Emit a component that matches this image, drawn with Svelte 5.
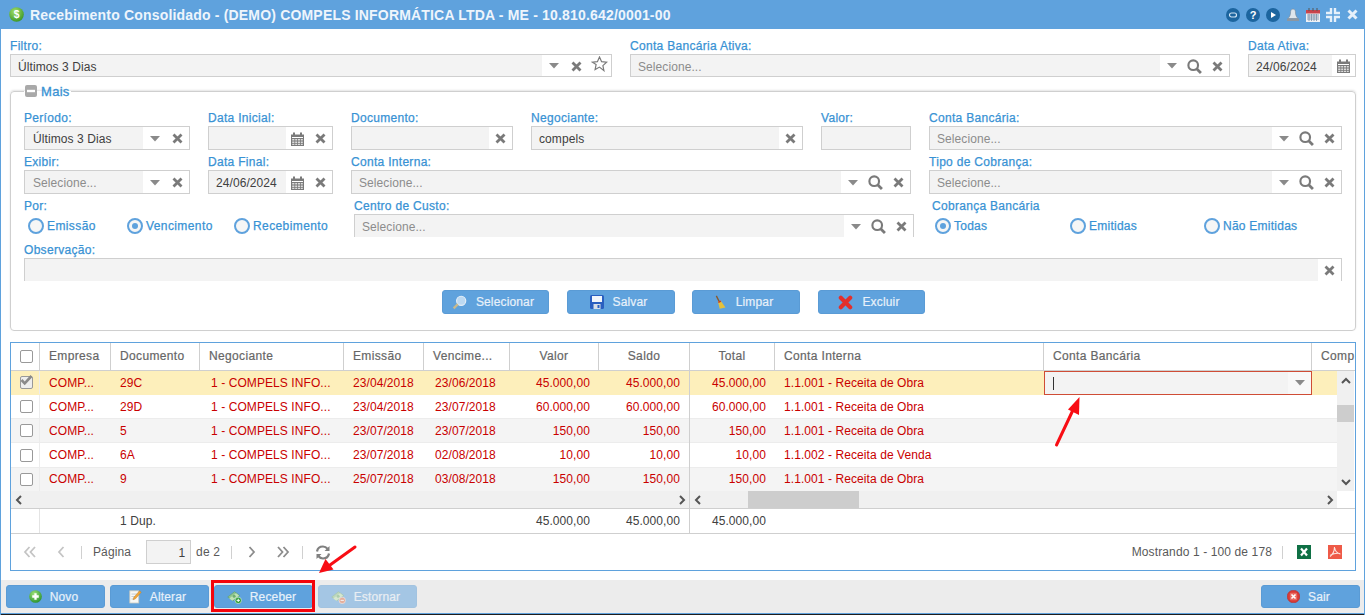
<script>
  const rows = [
    { doc: '29C', em: '23/04/2018', ve: '23/06/2018', val: '45.000,00', ci: '1.1.001 - Receita de Obra', sel: true },
    { doc: '29D', em: '23/04/2018', ve: '23/07/2018', val: '60.000,00', ci: '1.1.001 - Receita de Obra' },
    { doc: '5', em: '23/07/2018', ve: '23/07/2018', val: '150,00', ci: '1.1.001 - Receita de Obra', alt: true },
    { doc: '6A', em: '23/07/2018', ve: '02/08/2018', val: '10,00', ci: '1.1.002 - Receita de Venda' },
    { doc: '9', em: '25/07/2018', ve: '03/08/2018', val: '150,00', ci: '1.1.001 - Receita de Obra', alt: true }
  ];
</script>

{#snippet caret()}<span class="trig"><svg width="12" height="6" viewBox="0 0 12 6"><path d="M1 0h10L6 5.500z" fill="#8a8a8a"/></svg></span>{/snippet}
{#snippet times()}<span class="trig"><svg width="11" height="11" viewBox="0 0 11 11"><path d="M1.500 1.500l8 8M9.500 1.500l-8 8" stroke="#7a7a7a" stroke-width="2.800"/></svg></span>{/snippet}
{#snippet search()}<span class="trig"><svg width="15" height="15" viewBox="0 0 14 14"><circle cx="5.800" cy="5.800" r="4.500" fill="none" stroke="#7a7a7a" stroke-width="2"/><path d="M9 9l4 4" stroke="#7a7a7a" stroke-width="2.600"/></svg></span>{/snippet}
{#snippet star()}<span class="trig st"><svg width="17" height="16" viewBox="0 0 16 16"><path d="M8 1l2.100 4.700 5 .5-3.700 3.400 1 5L8 11.100 3.600 13.600l1-5L.9 6.200l5-.5z" fill="none" stroke="#7a7a7a" stroke-width="1.200"/></svg></span>{/snippet}
{#snippet cal()}<span class="trig"><svg width="13" height="14" viewBox="0 0 13 14"><path d="M0 2.500h13V14H0z" fill="#7a7a7a"/><path d="M3 0.500v3M10 0.500v3" stroke="#7a7a7a" stroke-width="2"/><path d="M1 5.500h11" stroke="#fff"/><path d="M1.200 7h2.200v1.600H1.200zM4.200 7h2v1.600h-2zM7 7h2v1.600H7zM9.800 7h2v1.600h-2zM1.200 9.400h2.200V11H1.200zM4.200 9.400h2V11h-2zM7 9.400h2V11H7zM9.800 9.400h2V11h-2zM1.200 11.700h2.200v1.300H1.200zM4.200 11.700h2v1.300h-2zM7 11.700h2v1.300H7zM9.800 11.700h2v1.300h-2z" fill="#ddd"/></svg></span>{/snippet}

{#snippet field(label, w, value, ph, trigs, cls = '')}
  <div class="fld {cls}" style="width:{w}px">
    <div class="lbl">{label}</div>
    <div class="box">
      <div class="inp" class:ph={ph}>{value || ph}</div>
      {#each trigs as t}
        {#if t === 'c'}{@render caret()}{:else if t === 'x'}{@render times()}{:else if t === 's'}{@render search()}{:else if t === 't'}{@render star()}{:else}{@render cal()}{/if}
      {/each}
    </div>
  </div>
{/snippet}

{#snippet radio(text, on, w)}
  <div class="radio" style="width:{w}px">
    <span class="rc" class:on={on}></span><span class="rt">{text}</span>
  </div>
{/snippet}

{#snippet money(kind)}
  <svg width="15" height="14" viewBox="0 0 20 18">
    <path d="M1 9L10 2l7 5-9 7z" fill="#8fc58f" stroke="#5f9f6a" stroke-width=".8"/>
    <path d="M3 11l9-7 4 3-9 7z" fill="#bfe3b4"/>
    <circle cx="9.500" cy="8" r="2" fill="#6fae70"/>
    <circle cx="15" cy="13.500" r="4.300" fill={kind === 'plus' ? '#2f9e3a' : '#e0734f'} stroke="#fff" stroke-width=".7"/>
    {#if kind === 'plus'}<path d="M12.800 13.500h4.400M15 11.300v4.400" stroke="#fff" stroke-width="1.300"/>{:else}<path d="M12.800 13.500h4.400" stroke="#fff" stroke-width="1.300"/>{/if}
  </svg>
{/snippet}

{#snippet rowcell(w, text, cls = '')}
  <div class="cell {cls}" style="width:{w}px">{text}</div>
{/snippet}

<div class="win">
  <header class="titlebar">
    <svg class="dollar" width="15" height="15" viewBox="0 0 16 16">
      <defs><radialGradient id="g1" cx=".4" cy=".3" r=".8"><stop offset="0" stop-color="#a5e06a"/><stop offset="1" stop-color="#2f8f1f"/></radialGradient></defs>
      <circle cx="8" cy="8" r="7.800" fill="url(#g1)"/>
      <text x="8" y="12" text-anchor="middle" font-size="11" font-weight="700" fill="#fff" font-family="Liberation Sans">$</text>
    </svg>
    <div class="title">Recebimento Consolidado - (DEMO) COMPELS INFORMÁTICA LTDA - ME - 10.810.642/0001-00</div>
    <div class="tools">
      <svg width="14" height="14" viewBox="0 0 14 14"><circle cx="7" cy="7" r="7" fill="#1c659f"/><rect x="3.500" y="5" width="7" height="4" rx="2" fill="none" stroke="#cfe3f4" stroke-width="1.200"/></svg>
      <svg width="14" height="14" viewBox="0 0 14 14"><circle cx="7" cy="7" r="7" fill="#1c659f"/><text x="7" y="11" text-anchor="middle" font-size="11" font-weight="700" fill="#fff" font-family="Liberation Sans">?</text></svg>
      <svg width="14" height="14" viewBox="0 0 14 14"><circle cx="7" cy="7" r="7" fill="#1c659f"/><path d="M5 4l5 3-5 3z" fill="#fff"/></svg>
      <svg width="14" height="14" viewBox="0 0 14 14"><path d="M7 1c2 0 2.500 2 2.500 4s1 4 2.500 5.500H2C3.500 9 4.500 7 4.500 5S5 1 7 1z" fill="#dfe6ec" stroke="#7d8a96" stroke-width=".6"/><path d="M1 10.500h12V13H1z" fill="#8b97a3"/></svg>
      <svg width="14" height="14" viewBox="0 0 14 14"><path d="M0 2h14v12H0z" fill="#eef1f5"/><path d="M0 2h14v3.500H0z" fill="#c8444c"/><path d="M3 0v3M7 0v3M11 0v3" stroke="#555" stroke-width="1"/><path d="M1 7h12M1 9h12M1 11h12M3 6v7M5.500 6v7M8 6v7M10.500 6v7" stroke="#7890a8" stroke-width=".8"/></svg>
      <svg width="14" height="14" viewBox="0 0 14 14"><path d="M5 0v5H0M9 0v5h5M5 14V9H0M9 14V9h5" fill="none" stroke="#e6f0fa" stroke-width="2.400"/></svg>
      <svg class="closex" width="11" height="11" viewBox="0 0 11 11"><path d="M1.500 1.500l8 8M9.500 1.500l-8 8" stroke="#e6f0fa" stroke-width="3"/></svg>
    </div>
  </header>

  <main class="body">
    <div class="toprow">
      {@render field('Filtro:', 602, 'Últimos 3 Dias', '', ['c', 'x', 't'])}
      {@render field('Conta Bancária Ativa:', 600, '', 'Selecione...', ['c', 's', 'x'])}
      {@render field('Data Ativa:', 108, '24/06/2024', '', ['k'])}
    </div>

    <fieldset class="fs">
      <legend>
        <svg width="12" height="12" viewBox="0 0 12 12"><rect width="12" height="12" rx="2" fill="#a9a9a9"/><rect x="2" y="4.800" width="8" height="2.400" fill="#fff"/></svg>
        <span>Mais</span>
      </legend>
      <div class="frow">
        {@render field('Período:', 166, 'Últimos 3 Dias', '', ['c', 'x'], 'p8')}
        {@render field('Data Inicial:', 125, ' ', '', ['k', 'x'])}
        {@render field('Documento:', 162, ' ', '', ['x'])}
        {@render field('Negociante:', 272, 'compels', '', ['x'])}
        {@render field('Valor:', 90, ' ', '', [])}
        {@render field('Conta Bancária:', 413, '', 'Selecione...', ['c', 's', 'x'])}
      </div>
      <div class="frow">
        {@render field('Exibir:', 166, '', 'Selecione...', ['c', 'x'], 'p8')}
        {@render field('Data Final:', 125, '24/06/2024', '', ['k', 'x'])}
        {@render field('Conta Interna:', 560, '', 'Selecione...', ['c', 's', 'x'])}
        {@render field('Tipo de Cobrança:', 413, '', 'Selecione...', ['c', 's', 'x'])}
      </div>
      <div class="frow">
        <div class="fld" style="width:312px">
          <div class="lbl">Por:</div>
          <div class="radios por">
            {@render radio('Emissão', false, 99)}
            {@render radio('Vencimento', true, 107)}
            {@render radio('Recebimento', false, 100)}
          </div>
        </div>
        {@render field('Centro de Custo:', 560, '', 'Selecione...', ['c', 's', 'x'], 'clip')}
        <div class="fld" style="width:410px">
          <div class="lbl">Cobrança Bancária</div>
          <div class="radios cob">
            {@render radio('Todas', true, 135)}
            {@render radio('Emitidas', false, 134)}
            {@render radio('Não Emitidas', false, 110)}
          </div>
        </div>
      </div>
      <div class="frow obs">
        {@render field('Observação:', 1318, ' ', '', ['x'], 'clip')}
      </div>
      <div class="actions">
        <button class="btn w107"><svg width="15" height="15" viewBox="0 0 18 18"><circle cx="11" cy="7" r="5.500" fill="#bcd9f2" stroke="#e3eef8" stroke-width="1.400"/><path d="M7 11l-5 5" stroke="#c9b98c" stroke-width="2.800"/></svg>Selecionar</button>
        <button class="btn w108"><svg width="14" height="14" viewBox="1 1 14 14"><rect x="1" y="1" width="14" height="14" rx="1.500" fill="#2a5fc0"/><rect x="3" y="2" width="10" height="6" fill="#f2f6fb"/><rect x="4.500" y="10" width="7" height="5" fill="#d7dfe8"/><rect x="8.500" y="11" width="2" height="3" fill="#2a5fc0"/></svg>Salvar</button>
        <button class="btn w108 lim"><svg width="13" height="15" viewBox="0 0 14 18"><path d="M2 1l3.500 7" stroke="#8b5a2b" stroke-width="1.600"/><path d="M4 8l3-1.500L13 15l-7 1.500z" fill="#e5c13c"/><path d="M4 8l3-1.500.8 1.600-3 1.500z" fill="#c0392b"/></svg>Limpar</button>
        <button class="btn w107"><svg width="15" height="15" viewBox="0 0 16 16"><path d="M3 3l10 10M13 3L3 13" stroke="#e2302c" stroke-width="4.400" stroke-linecap="round"/></svg>Excluir</button>
      </div>
    </fieldset>

    <section class="grid">
      <div class="panes">
        <div class="pane left">
          <div class="hdr">
            <div class="hc chk" style="width:29px"><span class="cb hcb"></span></div>
            <div class="hc" style="width:71px">Empresa</div>
            <div class="hc" style="width:89px">Documento</div>
            <div class="hc" style="width:144px">Negociante</div>
            <div class="hc" style="width:80px">Emissão</div>
            <div class="hc" style="width:86px">Vencime...</div>
            <div class="hc ctr" style="width:89px">Valor</div>
            <div class="hc ctr last" style="width:90px">Saldo</div>
          </div>
          <div class="rows">
            {#each rows as r}
              <div class="row" class:sel={r.sel} class:alt={r.alt}>
                <div class="cell chk" style="width:29px">
                  <span class="cb">{#if r.sel}<svg width="13" height="11" viewBox="0 0 13 11"><path d="M1.500 5l3.200 3.400L11.500 1" fill="none" stroke="#8a8a8a" stroke-width="2.600"/></svg>{/if}</span>
                </div>
                {@render rowcell(71, 'COMP...')}
                {@render rowcell(89, r.doc)}
                {@render rowcell(144, '1 - COMPELS INFO...', 'sh')}
                {@render rowcell(80, r.em)}
                {@render rowcell(86, r.ve, 'sh')}
                {@render rowcell(89, r.val, 'num')}
                {@render rowcell(90, r.val, 'num')}
              </div>
            {/each}
          </div>
          <div class="hscroll">
            <svg class="chev" width="8" height="10" viewBox="0 0 8 10"><path d="M6 1L2 5l4 4" fill="none" stroke="#555" stroke-width="2"/></svg>
            <svg class="chev end" width="8" height="10" viewBox="0 0 8 10"><path d="M2 1l4 4-4 4" fill="none" stroke="#555" stroke-width="2"/></svg>
          </div>
          <div class="sum">
            <div class="sc" style="width:29px"></div>
            <div class="sc nb" style="width:71px"></div>
            <div class="sc nb" style="width:233px">1 Dup.</div>
            <div class="sc nb" style="width:80px"></div>
            <div class="sc nb" style="width:86px"></div>
            <div class="sc nb num" style="width:89px">45.000,00</div>
            <div class="sc nb num" style="width:90px">45.000,00</div>
          </div>
        </div>

        <div class="pane right">
          <div class="hdr">
            <div class="hc ctr" style="width:85px">Total</div>
            <div class="hc" style="width:269px">Conta Interna</div>
            <div class="hc" style="width:268px">Conta Bancária</div>
            <div class="hc nb" style="width:43px">Comp</div>
          </div>
          <div class="rbody">
            <div class="rows">
              {#each rows as r, i}
                <div class="row" class:sel={r.sel} class:alt={r.alt}>
                  {@render rowcell(85, r.val, 'num')}
                  {@render rowcell(269, r.ci)}
                  {#if i === 0}
                    <div class="editor"><span class="cur"></span><span class="etrig"><svg width="12" height="6" viewBox="0 0 12 6"><path d="M1 0h10L6 5.500z" fill="#8a8a8a"/></svg></span></div>
                  {:else}
                    <div class="cell" style="width:268px"></div>
                  {/if}
                  <div class="cell" style="width:25px"></div>
                </div>
              {/each}
            </div>
            <div class="vscroll">
              <svg width="10" height="8" viewBox="0 0 10 8"><path d="M1 6l4-4 4 4" fill="none" stroke="#555" stroke-width="2"/></svg>
              <div class="vthumb"></div>
              <svg class="vend" width="10" height="8" viewBox="0 0 10 8"><path d="M1 2l4 4 4-4" fill="none" stroke="#555" stroke-width="2"/></svg>
            </div>
          </div>
          <div class="hsrow">
            <div class="hscroll r">
              <svg class="chev" width="8" height="10" viewBox="0 0 8 10"><path d="M6 1L2 5l4 4" fill="none" stroke="#555" stroke-width="2"/></svg>
              <div class="hthumb"></div>
              <svg class="chev end" width="8" height="10" viewBox="0 0 8 10"><path d="M2 1l4 4-4 4" fill="none" stroke="#555" stroke-width="2"/></svg>
            </div>
          </div>
          <div class="sum">
            <div class="sc nb num" style="width:85px">45.000,00</div>
          </div>
        </div>
      </div>

      <div class="pager">
        <span class="pb first"><svg width="14" height="12" viewBox="0 0 14 12"><path d="M6.500 1L2 6l4.500 5M12 1L7.500 6l4.500 5" fill="none" stroke="#c4c4c4" stroke-width="1.800"/></svg></span>
        <span class="pb prev"><svg width="8" height="12" viewBox="0 0 8 12"><path d="M6.500 1L2 6l4.500 5" fill="none" stroke="#c4c4c4" stroke-width="1.800"/></svg></span>
        <span class="sep s1"></span>
        <span class="ptxt pg">Página</span>
        <span class="pinp">1</span>
        <span class="ptxt de">de 2</span>
        <span class="sep s2"></span>
        <span class="pb nx"><svg width="8" height="12" viewBox="0 0 8 12"><path d="M1.500 1L6 6l-4.500 5" fill="none" stroke="#8c8c8c" stroke-width="1.800"/></svg></span>
        <span class="pb la"><svg width="14" height="12" viewBox="0 0 14 12"><path d="M2 1l4.500 5L2 11M7.500 1L12 6l-4.500 5" fill="none" stroke="#8c8c8c" stroke-width="1.800"/></svg></span>
        <span class="sep s3"></span>
        <span class="pb re"><svg width="16" height="15" viewBox="0 0 16 15"><path d="M2 6.500C2.500 3.500 5 1.500 8 1.500c2 0 3.500 1 4.500 2.200M14 8.500c-.5 3-3 5-6 5-2 0-3.500-1-4.500-2.200" fill="none" stroke="#808080" stroke-width="2.200"/><path d="M14.500 1v5h-5zM1.500 14V9h5z" fill="#808080"/></svg></span>
        <span class="ptxt most">Mostrando 1 - 100 de 178</span>
        <span class="sep s4"></span>
        <svg class="xl" width="14" height="14" viewBox="0 0 14 14"><rect width="14" height="14" fill="#0f7045"/><path d="M4 3.500l6 7M10 3.500l-6 7" stroke="#fff" stroke-width="2.200"/></svg>
        <svg class="pdf" width="14" height="14" viewBox="0 0 14 14"><rect width="14" height="14" fill="#ee5a48"/><path d="M6.500 2c0 3.500-2 7.500-4.500 9.500M6.500 2c.5 4 3 6.500 6 7M2.500 10c3-1.500 6-2 9.500-1.500" fill="none" stroke="#fde5e0" stroke-width="1.100"/></svg>
      </div>
    </section>
  </main>

  <footer class="foot">
    <button class="btn f"><svg width="13" height="13" viewBox="0 0 16 16"><defs><radialGradient id="g2" cx=".4" cy=".3" r=".8"><stop offset="0" stop-color="#9fe37a"/><stop offset="1" stop-color="#1f8a26"/></radialGradient></defs><circle cx="8" cy="8" r="7.800" fill="url(#g2)"/><path d="M4 8h8M8 4v8" stroke="#fff" stroke-width="2.800"/></svg>Novo</button>
    <button class="btn f"><svg width="13" height="15" viewBox="0 0 16 18"><rect x="1" y="2" width="11" height="15" fill="#f8f8f4" stroke="#c9c9c0"/><path d="M3 6h7M3 9h5M3 12h4" stroke="#b9c3cc"/><path d="M5 13l1-3 7-8 2 1.800-7 8z" fill="#f0a63a" stroke="#b97a1e" stroke-width=".5"/></svg>Alterar</button>
    <button class="btn f">{@render money('plus')}Receber</button>
    <button class="btn f off">{@render money('minus')}Estornar</button>
    <button class="btn f sair"><svg width="13" height="13" viewBox="0 0 16 16"><circle cx="8" cy="8" r="7.800" fill="#d93a36" stroke="#b52a28" stroke-width=".6"/><rect x="3.500" y="3.500" width="9" height="9" rx="1.500" fill="#e96a62"/><path d="M5.500 5.500l5 5M10.500 5.500l-5 5" stroke="#fff" stroke-width="2"/></svg>Sair</button>
  </footer>

  <div class="redbox"></div>
  <svg class="marks" width="1365" height="615" viewBox="0 0 1365 615">
    <path d="M1056.500 445L1073 410" stroke="#f80d14" stroke-width="3" stroke-linecap="round"/>
    <path d="M1079.500 397l-.5 18-11-5.500z" fill="#f80d14"/>
    <path d="M355 547L330 565" stroke="#f80d14" stroke-width="3" stroke-linecap="round"/>
    <path d="M319 573l6.500-14 8 10.500z" fill="#f80d14"/>
  </svg>
</div>

<style>
  :global(body) { margin: 0; background: #fff; }
  .win {
    position: relative;
    width: 1365px;
    height: 615px;
    box-sizing: border-box;
    display: flex;
    flex-direction: column;
    border-left: 1px solid #5fa2dd;
    border-right: 1px solid #5fa2dd;
    overflow: hidden;
    font: 12px "Liberation Sans", Arial, sans-serif;
    color: #404040;
    background: #fff;
  }
  .titlebar {
    height: 29px;
    flex: none;
    margin: 0 -1px;
    background: #5fa2dd;
    display: flex;
    align-items: center;
    padding: 0 7px 0 9px;
    box-sizing: border-box;
  }
  .dollar { margin-right: 6px; flex: none; }
  .title { color: #eef5fc; font-size: 14px; font-weight: 700; white-space: nowrap; letter-spacing: .18px; }
  .tools { margin-left: auto; display: flex; align-items: center; gap: 6px; }
  .closex { margin-left: 1px; }
  .body { flex: 1; padding: 9px 8px 0 9px; display: flex; flex-direction: column; min-height: 0; }
  .toprow { display: flex; gap: 18px; }
  .fld { flex: none; }
  .lbl {
    height: 16px; line-height: 16px; color: #3892d4; white-space: nowrap;
    letter-spacing: .3px; -webkit-text-stroke: .25px #3892d4;
  }
  .box {
    display: flex;
    height: 24px;
    box-sizing: border-box;
    border: 1px solid #cfcfcf;
    background: #fff;
  }
  .toprow .box { height: 23px; }
  .inp {
    flex: 1;
    min-width: 0;
    background: #f3f3f3;
    padding-left: 7px;
    line-height: 24px;
    letter-spacing: .08px;
    white-space: pre;
    overflow: hidden;
  }
  .p8 .inp { padding-left: 8px; }
  .inp.ph { color: #8c8c8c; }
  .trig { flex: none; width: 23px; padding-top: 1px; box-sizing: border-box; display: flex; align-items: center; justify-content: center; }
  .trig.st { padding: 0 0 3px; }
  .clip .box { height: 23px; border-bottom: none; }
  .fs {
    margin: 6px 0 0;
    padding: 11px 13px 17px;
    border: 1px solid #cfcfcf;
    border-radius: 4px;
    min-width: 0;
    height: 248px;
    box-sizing: border-box;
    box-shadow: 0 -1px 2px #e4e4e4;
  }
  legend {
    padding: 0 1px;
    margin-left: 0;
    height: 16px;
    display: flex;
    align-items: center;
    gap: 4px;
    color: #3892d4;
    font-size: 13px;
    letter-spacing: .3px;
    -webkit-text-stroke: .3px #3892d4;
  }
  .frow { display: flex; gap: 18px; height: 44px; }
  .frow.obs { height: 48px; }
  .radios { display: flex; height: 24px; align-items: center; padding-left: 4px; }
  .radios.cob { padding-left: 3px; }
  .radio { display: flex; align-items: center; flex: none; }
  .rc {
    width: 16px; height: 16px; box-sizing: border-box;
    border: 2px solid #5fa2dd; border-radius: 50%;
    background: #f6f6f6; flex: none; margin-right: 3px;
    display: flex; align-items: center; justify-content: center;
  }
  .rc.on::after { content: ''; width: 6px; height: 6px; border-radius: 50%; background: #5fa2dd; }
  .rt { color: #3892d4; white-space: nowrap; letter-spacing: .25px; -webkit-text-stroke: .25px #3892d4; }
  .por .rt { letter-spacing: .4px; }
  .actions { display: flex; justify-content: center; gap: 18px; }
  .lim { margin-left: -1px; }
  .btn {
    height: 24px;
    box-sizing: border-box;
    background: #5fa2dd;
    border: 1px solid #5a9bd5;
    border-radius: 3px;
    color: #e8f1fa;
    font: 400 12px "Liberation Sans", Arial, sans-serif;
    letter-spacing: .15px;
    -webkit-text-stroke: .2px #e8f1fa;
    display: flex;
    align-items: center;
    justify-content: center;
    gap: 9px;
    padding: 0 4px 0 0;
  }
  .w107 { width: 107px; }
  .w108 { width: 108px; }
  .grid {
    margin-top: 11px;
    height: 229px;
    box-sizing: border-box;
    border: 1px solid #5fa2dd;
    display: flex;
    flex-direction: column;
  }
  .panes { display: flex; height: 191px; border-bottom: 1px solid #cfcfcf; flex: none; box-sizing: border-box; }
  .pane { display: flex; flex-direction: column; min-width: 0; }
  .pane.left { width: 679px; flex: none; border-right: 1px solid #cfcfcf; box-sizing: border-box; }
  .pane.right { flex: 1; overflow: hidden; }
  .hdr { display: flex; height: 28px; flex: none; border-bottom: 1px solid #cfcfcf; box-sizing: border-box; }
  .hc {
    flex: none; box-sizing: border-box; height: 27px; line-height: 27px;
    padding: 0 9px; color: #666;
    letter-spacing: .35px; -webkit-text-stroke: .2px #666;
    border-right: 1px solid #cfcfcf; white-space: nowrap; overflow: hidden;
  }
  .hc.ctr { text-align: center; }
  .hc.last, .hc.nb { border-right: none; }
  .chk { padding: 0 0 0 3px; display: flex; align-items: center; justify-content: center; }
  .hc.chk { padding-bottom: 1px; }
  .cb {
    width: 13px; height: 13px; box-sizing: border-box;
    border: 1.500px solid #999; border-radius: 2px; background: #fff;
    display: block; position: relative;
  }
  .sel .cb { background: #eee; }
  .cb svg { position: absolute; left: -1px; top: -2px; }
  .rows { flex: 1; min-width: 0; overflow: hidden; }
  .row { display: flex; height: 24px; box-sizing: border-box; border-bottom: 1px solid #ececec; background: #fff; }
  .row:nth-child(4) { height: 25px; }
  .row:nth-child(5) { height: 23px; border-bottom: none; }
  .row:nth-child(5) .cell { line-height: 23px; }
  .row.alt { background: #f4f4f4; }
  .row.sel { background: #fdefbb; border-bottom-color: #fdefbb; }
  .cell {
    flex: none; box-sizing: border-box; padding: 0 9px; color: #c90000;
    line-height: 24px; white-space: nowrap; overflow: hidden; letter-spacing: .08px;
  }
  .cell.sh { padding-left: 11px; }
  .cell.chk { border-right: 1px solid #ececec; padding: 0 0 0 3px; }
  .cell.num, .sc.num { text-align: right; }
  .editor {
    flex: none; width: 268px; height: 24px; box-sizing: border-box;
    border: 1px solid #cf4c35; background: #f3f3f3;
    display: flex; align-items: center; justify-content: space-between;
  }
  .cur { width: 1px; height: 13px; background: #333; margin-left: 8px; }
  .etrig { width: 23px; align-self: stretch; background: #f8f8f8; display: flex; align-items: center; justify-content: center; }
  .rbody { display: flex; height: 120px; flex: none; }
  .vscroll { width: 17px; margin-right: 1px; flex: none; background: #f0f0f0; display: flex; flex-direction: column; align-items: center; padding-top: 6px; box-sizing: border-box; }
  .vthumb { width: 17px; height: 17px; background: #cdcdcd; margin-top: 20px; }
  .vend { margin-top: auto; margin-bottom: 5px; }
  .hscroll { height: 17px; flex: none; background: #f0f0f0; display: flex; align-items: center; padding: 0 3px 0 4px; }
  .chev { flex: none; }
  .chev.end { margin-left: auto; }
  .hsrow { display: flex; height: 17px; flex: none; padding-right: 18px; }
  .hscroll.r { flex: 1; }
  .hthumb { width: 111px; height: 17px; background: #cdcdcd; margin-left: 46px; }
  .sum { display: flex; height: 25px; flex: none; border-top: 1px solid #cfcfcf; box-sizing: border-box; }
  .sc { flex: none; box-sizing: border-box; padding: 0 9px; line-height: 24px; border-right: 1px solid #e4e4e4; white-space: nowrap; letter-spacing: .08px; }
  .sc.nb { border-right: none; }
  .pager { flex: 1; display: flex; align-items: center; }
  .pb { display: flex; flex: none; align-items: center; justify-content: center; }
  .first { margin-left: 12px; }
  .prev { margin-left: 20px; }
  .sep { width: 1px; height: 13px; background: #d0d0d0; flex: none; }
  .s1 { margin-left: 16px; }
  .ptxt { color: #595959; white-space: nowrap; flex: none; letter-spacing: .12px; }
  .pg { margin-left: 11px; }
  .pinp {
    margin-left: 15px; width: 45px; height: 24px; box-sizing: border-box;
    border: 1px solid #cfcfcf; background: #f3f3f3; text-align: right; padding-right: 5px; line-height: 24px; flex: none;
  }
  .de { margin-left: 5px; }
  .s2 { margin-left: 11px; }
  .nx { margin-left: 16px; }
  .la { margin-left: 20px; }
  .s3 { margin-left: 12px; }
  .re { margin-left: 12px; }
  .most { margin-left: auto; }
  .s4 { margin-left: 10px; }
  .xl { margin-left: 14px; flex: none; }
  .pdf { margin: 0 13px 0 17px; flex: none; }
  .foot {
    flex: none;
    height: 35px;
    margin: 0 -1px;
    box-sizing: border-box;
    background: #ececec;
    border-bottom: 1px solid #1d1d1d;
    box-shadow: inset 0 -1px 0 #5fa2dd;
    padding: 5px 5px 0 6px;
    display: flex;
    gap: 5px;
    align-items: flex-start;
  }
  .btn.f { width: 99px; height: 23px; gap: 8px; }
  .btn.off { opacity: .5; }
  .btn.sair { margin-left: auto; }
  .redbox {
    position: absolute; left: 210px; top: 580px; width: 104px; height: 32px;
    box-sizing: border-box; border: 3px solid #f4040c;
  }
  .marks { position: absolute; left: -1px; top: 0; pointer-events: none; }
</style>
